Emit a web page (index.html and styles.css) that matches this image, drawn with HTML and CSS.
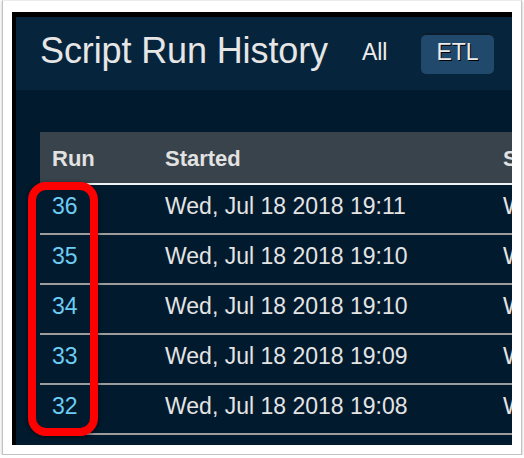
FILE: index.html
```html
<!DOCTYPE html>
<html lang="en">
<head>
    <meta charset="UTF-8">
    <meta name="viewport" content="width=device-width, initial-scale=1.0">
    <title>Script Run History</title>
    <link rel="stylesheet" href="styles.css">
</head>
<body>
    <div class="card">
        <div class="screen">
            <div class="topbar">
                <h1 class="title">Script Run History</h1>
                <span class="tab">All</span>
                <span class="tab active">ETL</span>
            </div>

            <div class="content">
                <table class="runs">
                    <colgroup>
                        <col class="col-run">
                        <col class="col-started">
                        <col class="col-status">
                    </colgroup>
                    <thead>
                        <tr>
                            <th>Run</th>
                            <th>Started</th>
                            <th>Status</th>
                        </tr>
                    </thead>
                    <tbody>
                        <tr>
                            <td class="run-id">36</td>
                            <td>Wed, Jul 18 2018 19:11</td>
                            <td>Wed</td>
                        </tr>
                        <tr>
                            <td class="run-id">35</td>
                            <td>Wed, Jul 18 2018 19:10</td>
                            <td>Wed</td>
                        </tr>
                        <tr>
                            <td class="run-id">34</td>
                            <td>Wed, Jul 18 2018 19:10</td>
                            <td>Wed</td>
                        </tr>
                        <tr>
                            <td class="run-id">33</td>
                            <td>Wed, Jul 18 2018 19:09</td>
                            <td>Wed</td>
                        </tr>
                        <tr>
                            <td class="run-id">32</td>
                            <td>Wed, Jul 18 2018 19:08</td>
                            <td>Wed</td>
                        </tr>
                    </tbody>
                </table>
            </div>

            <!-- annotation box round the run column -->
            <div class="highlight"></div>
        </div>
    </div>
</body>
</html>
```

FILE: styles.css
```css
body {
    margin: 0;
    background-color: #ffffff;
    font-family: "Liberation Sans", Arial, sans-serif;
}
.card {
    margin-left: 2px;
    width: 500px;
    height: 433px;
    padding: 11px 9px 9px 9px;
    border: 1px solid #c2c2c2;
    border-top-color: #ececec;
    background-color: #ffffff;
    box-shadow: 0 1px 3px rgba(0, 0, 0, 0.25);
}
.screen {
    position: relative;
    height: 428px;
    border-top: 5px solid #000000;
    border-left: 4px solid #000000;
    background-color: #021a2d; /* fond sombre */
    overflow: hidden;
}
.topbar {
    display: flex;
    align-items: flex-start;
    gap: 19px;
    height: 57px;
    padding: 16px 0 0 24px;
    background-color: #06243b;
}
.title {
    margin: 0;
    font-size: 36px;
    font-weight: normal;
    line-height: 36px;
    letter-spacing: -0.12px;
    color: #e6e6e6;
    white-space: nowrap;
}
.tab {
    height: 39px;
    padding: 0 15px 2px 15px;
    border-radius: 5px;
    font-size: 23px;
    line-height: 39px;
    color: #ececec;
}
.tab.active {
    background-color: #21496b;
    box-shadow: inset 0 2px 0 #0b1d2c;
    text-shadow: 1px 1px 0 #000000;
}
.content {
    padding: 42px 0 0 24px;
}
.runs {
    width: 472px;
    table-layout: fixed;
    border-collapse: collapse;
}
.col-run {
    width: 113px;
}
.col-started {
    width: 338px;
}
.col-status {
    width: 21px;
}
.runs th {
    height: 26px;
    padding: 14px 0 11px 12px;
    background-color: #38434c;
    border-bottom: 2px solid #f2f2f2;
    font-size: 22px;
    line-height: 26px;
    font-weight: bold;
    text-align: left;
    color: #e2e2e2;
    white-space: nowrap;
    overflow: hidden;
}
.runs td {
    height: 26px;
    padding: 8px 0 14px 12px;
    border-bottom: 2px solid #9d9d9d;
    font-size: 23px;
    line-height: 26px;
    color: #e4e4e4;
    vertical-align: top;
    white-space: nowrap;
    overflow: hidden;
}
.runs td.run-id {
    color: #6cccf3;
}
.highlight {
    position: absolute;
    left: 12px;
    top: 165px;
    width: 70px;
    height: 254px;
    box-sizing: border-box;
    border: 8px solid #ff0000;
    border-radius: 18px;
    box-shadow: 0 1px 4px rgba(0, 0, 0, 0.6);
}
```
